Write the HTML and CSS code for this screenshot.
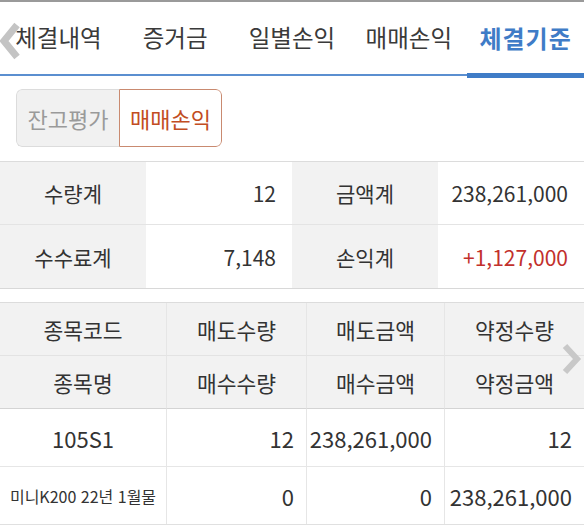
FILE: index.html
```html
<!DOCTYPE html>
<html lang="ko">
<head>
<meta charset="utf-8">
<link rel="stylesheet" href="styles.css">
</head>
<body>
<div class="screen">
  <nav class="tabs">
    <div class="tab">체결내역</div>
    <div class="tab">증거금</div>
    <div class="tab">일별손익</div>
    <div class="tab">매매손익</div>
    <div class="tab active">체결기준</div>
    <svg class="chev chev-left" width="22" height="40" viewBox="0 0 22 40"><path d="M18 4 L5 20 L18 36" fill="none" stroke="#c4c4c4" stroke-width="7" stroke-linejoin="miter"/></svg>
  </nav>

  <div class="seg-wrap">
    <div class="seg">
      <div class="seg-btn">잔고평가</div>
      <div class="seg-btn on">매매손익</div>
    </div>
  </div>

  <div class="summary">
    <div class="s-cell lbl">수량계</div>
    <div class="s-cell val">12</div>
    <div class="s-cell lbl">금액계</div>
    <div class="s-cell val">238,261,000</div>
    <div class="s-cell lbl bt">수수료계</div>
    <div class="s-cell val bt">7,148</div>
    <div class="s-cell lbl bt">손익계</div>
    <div class="s-cell val bt red">+1,127,000</div>
  </div>

  <div class="detail-wrap">
    <div class="detail">
      <div class="d-cell hd">종목코드</div>
      <div class="d-cell hd">매도수량</div>
      <div class="d-cell hd">매도금액</div>
      <div class="d-cell hd">약정수량</div>
      <div class="d-cell hd h2">종목명</div>
      <div class="d-cell hd h2">매수수량</div>
      <div class="d-cell hd h2">매수금액</div>
      <div class="d-cell hd h2">약정금액</div>
      <div class="d-cell ctr r1">105S1</div>
      <div class="d-cell num r1">12</div>
      <div class="d-cell num r1">238,261,000</div>
      <div class="d-cell num r1">12</div>
      <div class="d-cell ctr small r2">미니K200 22년 1월물</div>
      <div class="d-cell num r2">0</div>
      <div class="d-cell num r2">0</div>
      <div class="d-cell num r2">238,261,000</div>
    </div>
    <svg class="chev chev-right" width="22" height="32" viewBox="0 0 22 32"><path d="M4 3 L16 16 L4 29" fill="none" stroke="#c8c8c8" stroke-width="6"/></svg>
  </div>
</div>
</body>
</html>
```

FILE: styles.css
```css
* { box-sizing: border-box; }
html, body { margin: 0; padding: 0; background: #fff; }
body {
  font-family: "Noto Sans CJK KR", "Noto Sans", sans-serif;
  color: #333;
  width: 584px;
  height: 526px;
  overflow: hidden;
}
.screen { border-top: 2px solid #9a9a9a; }

.tabs {
  position: relative;
  display: flex;
  height: 74px;
  border-bottom: 2px solid #5b8fd0;
}
.tab {
  flex: 1;
  display: flex;
  align-items: center;
  justify-content: center;
  font-size: 23.5px;
  color: #3a3a3a;
  padding-bottom: 2px;
  position: relative;
}
.tab.active { color: #3f7cc7; font-weight: 700; font-size: 24px; letter-spacing: 1px; }
.tab.active::after {
  content: "";
  position: absolute;
  left: 0; right: 0; bottom: -4px;
  height: 5px;
  background: #3f7cc7;
}
.chev { position: absolute; }
.chev-left { left: -1px; top: 19px; }
.chev-right { right: 1px; top: 41px; }

.seg-wrap { padding: 13px 16px 14px; }
.seg {
  display: inline-flex;
  height: 58px;
  border-radius: 6px;
  overflow: hidden;
}
.seg-btn {
  display: flex;
  align-items: center;
  justify-content: center;
  font-size: 22px;
  width: 103px;
}
.seg-btn:first-child {
  background: #f1f1f1;
  color: #9a9a9a;
  border: 1px solid #dcdcdc;
  border-right: none;
  border-radius: 6px 0 0 6px;
}
.seg-btn.on {
  background: #fff;
  color: #c24d22;
  border: 1px solid #c98a70;
  border-radius: 0 6px 6px 0;
}

.summary {
  display: grid;
  grid-template-columns: 146px 146px 146px 146px;
  grid-template-rows: 62px 64px;
  border-top: 1px solid #dcdcdc;
  border-bottom: 1px solid #d8d8d8;
}
.s-cell {
  display: flex;
  align-items: center;
  font-size: 21px;
}
.s-cell.bt { border-top: 1px solid #e4e4e4; }
.s-cell.lbl { background: #f2f2f2; justify-content: center; }
.s-cell.val { justify-content: flex-end; padding-right: 16px; }
.s-cell.red { color: #c2302c; }

.detail-wrap { position: relative; margin-top: 13px; }
.detail {
  display: grid;
  grid-template-columns: 166px 140px 138px 140px;
  grid-template-rows: 52px 53px 58px 58px;
  border-top: 1px solid #dcdcdc;
  border-bottom: 1px solid #e0e0e0;
}
.d-cell {
  display: flex;
  align-items: center;
  font-size: 21.5px;
  border-left: 1px solid #e6e6e6;
}
.d-cell:nth-child(4n+1) { border-left: none; }
.d-cell.hd { background: #f2f2f2; justify-content: center; }
.d-cell.h2 { border-top: 1px solid #e3e3e3; }
.d-cell.r1 { border-top: 1px solid #d4d4d4; }
.d-cell.r2 { border-top: 1px solid #e6e6e6; }
.d-cell.ctr { justify-content: center; }
.d-cell.num { justify-content: flex-end; padding-right: 12px; font-size: 22px; }
.d-cell.r1.ctr { font-size: 22px; }
.d-cell.small { font-size: 16px; }
```
